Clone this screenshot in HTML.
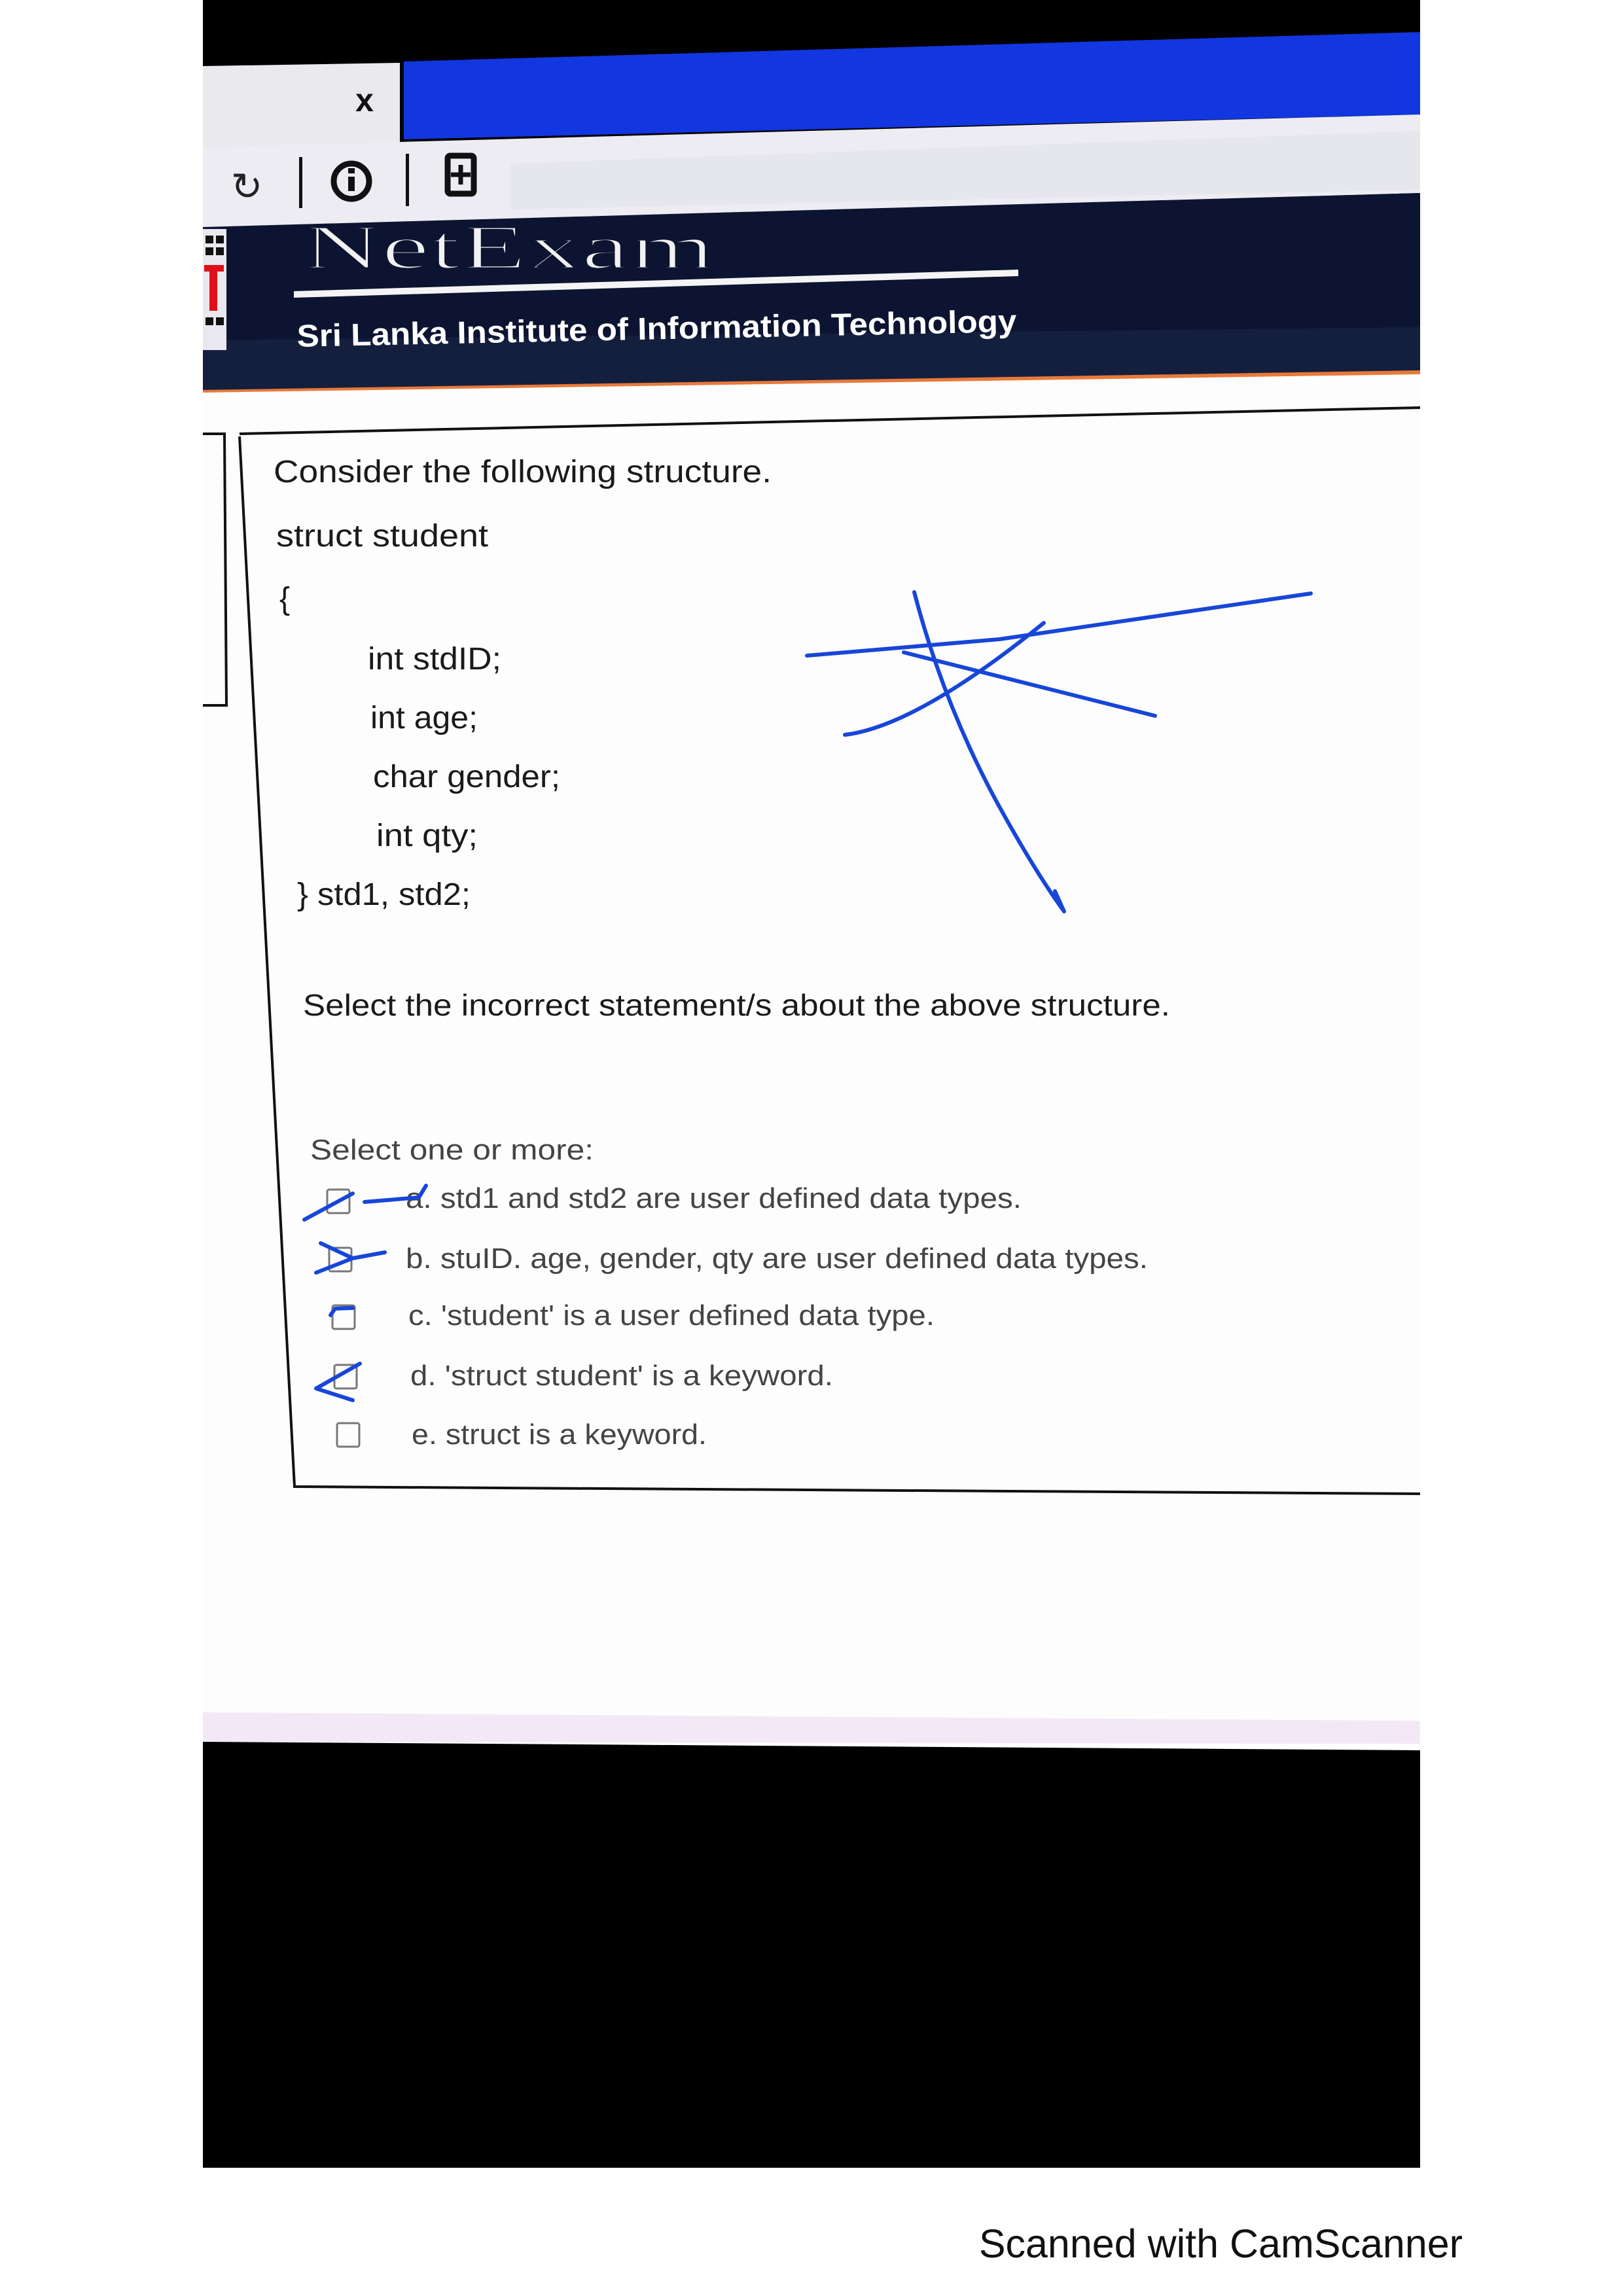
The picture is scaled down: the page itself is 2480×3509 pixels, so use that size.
<!DOCTYPE html>
<html><head><meta charset="utf-8"><style>
html,body{margin:0;padding:0;background:#fff}
svg{display:block}
</style></head><body>
<svg width="2480" height="3509" viewBox="0 0 2480 3509" xmlns="http://www.w3.org/2000/svg">
<rect width="2480" height="3509" fill="#fff"/>
<rect x="310" y="0" width="1860" height="600" fill="#000"/>
<polygon points="617,94 2170,49 2170,175 617,213" fill="#1236e0"/>
<polygon points="310,101 611,96 611,225 310,230" fill="#e9e9ee"/>
<text x="557" y="170" font-family="Liberation Sans, sans-serif" font-size="50" font-weight="bold" fill="#111" text-anchor="middle">x</text>
<polygon points="310,225 2170,175 2170,295 310,350" fill="#ececf2"/>
<polygon points="780,250 2170,200 2170,290 780,320" fill="#e2e2ea" opacity="0.6"/>
<text x="377" y="305" font-family="DejaVu Sans, sans-serif" font-size="58" fill="#222" text-anchor="middle">↻</text>
<rect x="457" y="240" width="5" height="78" fill="#111"/>
<circle cx="537" cy="277" r="27" fill="none" stroke="#111" stroke-width="9"/>
<rect x="532" y="270" width="10" height="22" fill="#111"/><rect x="532" y="257" width="10" height="8" fill="#111"/>
<rect x="620" y="235" width="5" height="80" fill="#111"/>
<rect x="684" y="238" width="40" height="58" rx="4" fill="none" stroke="#111" stroke-width="9"/>
<path d="M704 252v30M689 267h30" stroke="#111" stroke-width="7"/>
<polygon points="310,347 2170,295 2170,570 310,598" fill="#0c1431"/>
<polygon points="310,520 2170,500 2170,570 310,598" fill="#1a2748" opacity="0.6"/>
<polygon points="310,596 2170,566 2170,576 310,606" fill="#e8793a"/>
<rect x="310" y="350" width="36" height="185" fill="#e8e8ee"/>
<rect x="314" y="360" width="12" height="12" fill="#111"/><rect x="330" y="360" width="12" height="12" fill="#111"/>
<rect x="314" y="378" width="12" height="12" fill="#111"/><rect x="330" y="378" width="12" height="12" fill="#111"/>
<rect x="312" y="405" width="30" height="10" fill="#e0101a"/><rect x="320" y="405" width="12" height="70" fill="#e0101a"/>
<rect x="314" y="485" width="12" height="12" fill="#111"/><rect x="330" y="485" width="12" height="12" fill="#111"/>
<text x="462" y="410" font-family="Liberation Serif, serif" font-size="96" fill="#f2f2f2" textLength="630" lengthAdjust="spacingAndGlyphs" stroke="#0c1431" stroke-width="3">NetExam</text>
<polygon points="449,445 1556,412 1556,422 449,455" fill="#f4f4f4"/>
<text x="454" y="530" font-family="Liberation Sans, sans-serif" font-size="48" font-weight="bold" fill="#fff" textLength="1100" lengthAdjust="spacingAndGlyphs" transform="rotate(-1.2 454 530)">Sri Lanka Institute of Information Technology</text>
<rect x="310" y="606" width="1860" height="2060" fill="#fdfdfd"/>
<polygon points="310,600 2170,572 2170,620 310,620" fill="#fdfdfd"/>
<polygon points="310,2617 2170,2630 2170,2665 310,2662" fill="#f3e9f6"/>
<polygon points="310,2662 2170,2675 2170,3313 310,3313" fill="#000"/>
<g stroke="#111" fill="none" stroke-width="4">
<path d="M366,663 L2170,623"/>
<path d="M310,663 L343,663 L346,1078 L310,1078"/>
<path d="M366,667 L450,2272 L2170,2283"/>
</g>
<g font-family="Liberation Sans, sans-serif" fill="#1a1a1a">
<text x="418" y="737" font-size="48" textLength="761" lengthAdjust="spacingAndGlyphs">Consider the following structure.</text>
<text x="422" y="835" font-size="48" textLength="324" lengthAdjust="spacingAndGlyphs">struct student</text>
<text x="427" y="931" font-size="48">{</text>
<text x="562" y="1023" font-size="48" textLength="204" lengthAdjust="spacingAndGlyphs">int stdID;</text>
<text x="566" y="1113" font-size="48" textLength="164" lengthAdjust="spacingAndGlyphs">int age;</text>
<text x="570" y="1203" font-size="48" textLength="286" lengthAdjust="spacingAndGlyphs">char gender;</text>
<text x="575" y="1293" font-size="48" textLength="155" lengthAdjust="spacingAndGlyphs">int qty;</text>
<text x="454" y="1383" font-size="48" textLength="265" lengthAdjust="spacingAndGlyphs">} std1, std2;</text>
<text x="463" y="1552" font-size="46" textLength="1325" lengthAdjust="spacingAndGlyphs">Select the incorrect statement/s about the above structure.</text>
</g>
<g font-family="Liberation Sans, sans-serif" fill="#444">
<text x="474" y="1772" font-size="44" textLength="433" lengthAdjust="spacingAndGlyphs">Select one or more:</text>
<text x="620" y="1846" font-size="44" textLength="941" lengthAdjust="spacingAndGlyphs">a. std1 and std2 are user defined data types.</text>
<text x="620" y="1938" font-size="44" textLength="1134" lengthAdjust="spacingAndGlyphs">b. stuID. age, gender, qty are user defined data types.</text>
<text x="624" y="2025" font-size="44" textLength="804" lengthAdjust="spacingAndGlyphs">c. 'student' is a user defined data type.</text>
<text x="627" y="2117" font-size="44" textLength="646" lengthAdjust="spacingAndGlyphs">d. 'struct student' is a keyword.</text>
<text x="629" y="2207" font-size="44" textLength="451" lengthAdjust="spacingAndGlyphs">e. struct is a keyword.</text>
</g>
<g fill="none" stroke="#777" stroke-width="3">
<rect x="500" y="1818" width="34" height="36" rx="3"/>
<rect x="503" y="1907" width="34" height="36" rx="3"/>
<rect x="508" y="1995" width="34" height="36" rx="3"/>
<rect x="511" y="2086" width="34" height="36" rx="3"/>
<rect x="515" y="2175" width="34" height="36" rx="3"/>
</g>
<g fill="none" stroke="#1746d8" stroke-width="6" stroke-linecap="round" stroke-linejoin="round">
<path d="M1233,1002 L1527,977 L2003,907"/>
<path d="M1397,905 Q1440,1070 1520,1220 Q1580,1330 1626,1393 L1612,1362"/>
<path d="M1291,1123 Q1400,1110 1595,952"/>
<path d="M1381,997 L1765,1094"/>
<path d="M465,1864 L539,1824"/>
<path d="M557,1837 L640,1830 L651,1812"/>
<path d="M490,1900 L539,1923 L483,1945 M539,1923 L588,1914"/>
<path d="M505,2010 L512,2000 L539,1999"/>
<path d="M550,2084 L483,2122 L539,2140"/>
</g>
<text x="2235" y="3450" font-family="Liberation Sans, sans-serif" font-size="61" fill="#111" text-anchor="end">Scanned with CamScanner</text>
</svg>
</body></html>
